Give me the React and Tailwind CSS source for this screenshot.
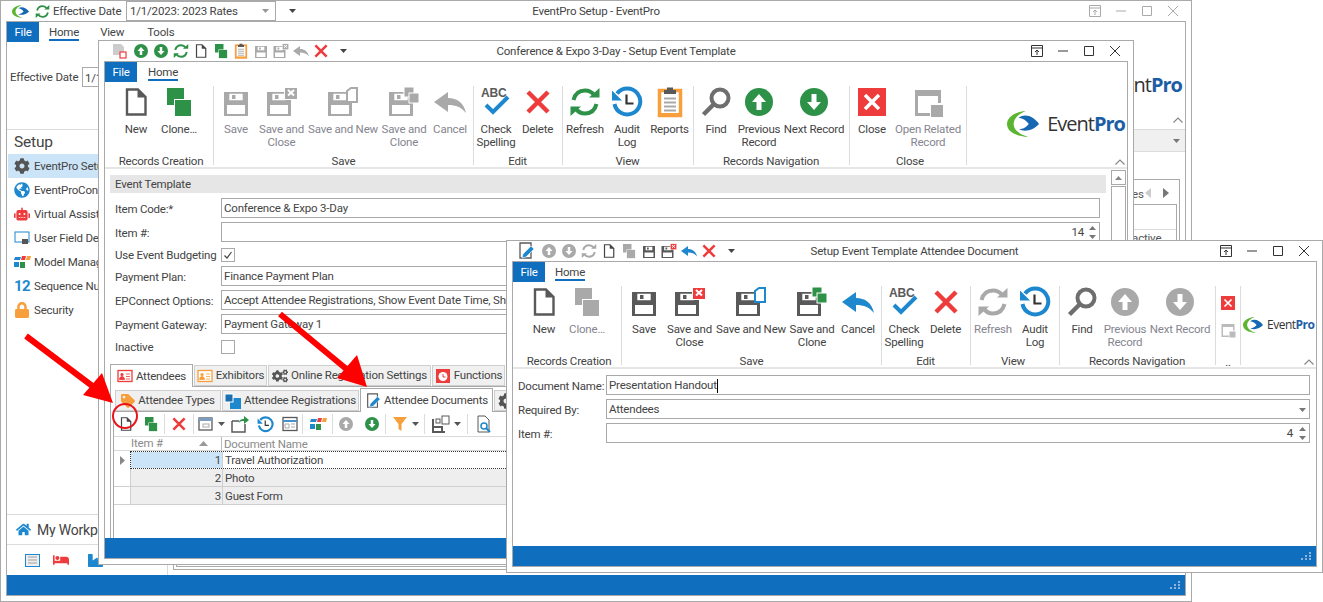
import React from 'react';
import { FaCog, FaCogs, FaGlobeAmericas, FaRobot, FaLock, FaHome, FaBed, FaIndustry, FaTag } from 'react-icons/fa';

const GREEN = '#2e9148';
const BLUE = '#1e88cf';
const RED = '#ee3b3b';
const ORANGE = '#f79f3d';
const DARK = '#595959';
const GREY = '#a9a9a9';

// every ribbon glyph lives in a 32x32 box, QAT re-uses them at 16-20px
function Svg({ size = 32, children, box = 32 }) {
  return (
    <svg width={size} height={size} viewBox={`0 0 ${box} ${box}`} className="shrink-0 block">
      {children}
    </svg>
  );
}

const Doc = ({ c = DARK, size }) => (
  <Svg size={size}>
    <path d="M7 3.5h11l7.5 7.5v17.5H7z" fill="#fff" stroke={c} strokeWidth="2.4" />
    <path d="M17.5 3l8.5 8.5h-8.5z" fill={c} />
  </Svg>
);

const Clone = ({ c = GREEN, size }) => (
  <Svg size={size}>
    <rect x="4" y="2" width="17" height="17" fill={c} />
    <rect x="11.5" y="13.5" width="17" height="17" fill={c} stroke="#fff" strokeWidth="1" />
  </Svg>
);

const Floppy = ({ c, x = 5 }) => (
  <g transform={`translate(${x} 6)`}>
    <path fillRule="evenodd" fill={c} d="M0 0h24v24H0z M5.300 1.700h13.400v6.600H5.300z M3 13h18v9H3z" />
    <rect x="8" y="3" width="3.500" height="4" fill={c} />
  </g>
);

const Save = ({ c = DARK, size }) => (
  <Svg size={size}>
    <Floppy c={c} x={4} />
  </Svg>
);

const SaveClose = ({ c = DARK, box = RED, size }) => (
  <Svg size={size}>
    <Floppy c={c} x={1} />
    <rect x="18.5" y="1.5" width="13" height="12" fill={box} stroke="#fff" />
    <path d="M22 4l6 5.5M28 4l-6 5.5" stroke="#fff" strokeWidth="2" />
  </Svg>
);

const SaveNew = ({ c = DARK, doc = BLUE, size }) => (
  <Svg size={size}>
    <Floppy c={c} x={1} />
    <path d="M20 15V5l4-3h6v14h-10z" fill="#fff" stroke={doc} strokeWidth="2" />
  </Svg>
);

const SaveClone = ({ c = DARK, g = GREEN, size }) => (
  <Svg size={size}>
    <Floppy c={c} x={1} />
    <rect x="16" y="1" width="10" height="10" fill={g} stroke="#fff" />
    <rect x="21" y="7" width="10" height="10" fill={g} stroke="#fff" />
  </Svg>
);

const Cancel = ({ c = BLUE, size }) => (
  <Svg size={size}>
    <path d="M0 16L14 6v6c9 0 16 5 18 15-5-6-10-8-18-8v7z" fill={c} />
  </Svg>
);

const Check = ({ size }) => (
  <Svg size={size}>
    <text x="1" y="11" fontSize="12" fontWeight="700" fontFamily="Liberation Sans, sans-serif" fill={DARK}>ABC</text>
    <path d="M6 19l7 7L28 11" fill="none" stroke={BLUE} strokeWidth="4" />
  </Svg>
);

const Cross = ({ c = RED, size }) => (
  <Svg size={size}>
    <path d="M6 6l20 20M26 6L6 26" stroke={c} strokeWidth="4.5" />
  </Svg>
);

const Refresh = ({ c = GREEN, size }) => (
  <Svg size={size}>
    <path d="M4.5 14C6 8 10 4.5 16 4.5c4 0 7 1.5 9.5 5" fill="none" stroke={c} strokeWidth="4" />
    <path d="M20 11.5h10.5V2z" fill={c} />
    <path d="M27.5 18c-1.5 6-5.500 9.500-11.500 9.500-4 0-7-1.500-9.500-5" fill="none" stroke={c} strokeWidth="4" />
    <path d="M12 20.500H1.500V30z" fill={c} />
  </Svg>
);

const Audit = ({ size }) => (
  <Svg size={size}>
    <path d="M6 7.500A13 13 0 1 1 3.500 18" fill="none" stroke={BLUE} strokeWidth="4" />
    <path d="M1 4.500v10h10z" fill={BLUE} />
    <path d="M15.500 8.500v9h7" fill="none" stroke="#333" strokeWidth="2.200" />
  </Svg>
);

const Reports = ({ size }) => (
  <Svg size={size}>
    <rect x="5.500" y="4.500" width="21" height="25" fill="#fff" stroke={ORANGE} strokeWidth="3.500" />
    <path d="M4 27h24v3.500H4z" fill={ORANGE} />
    <path d="M10 4h12v4H10zM13 1.500h6V4h-6z" fill={DARK} />
    <path d="M10 12.500h12M10 16.500h12M10 20.500h12M10 24.500h12" stroke={GREY} strokeWidth="1.800" />
  </Svg>
);

const Find = ({ size, c = '#6e6e6e' }) => (
  <Svg size={size}>
    <circle cx="20" cy="12" r="8.500" fill="none" stroke={c} strokeWidth="4" />
    <path d="M14 18L3.500 28.500" stroke={c} strokeWidth="4.500" />
  </Svg>
);

const Round = ({ down, c = GREEN, size }) => (
  <Svg size={size}>
    <circle cx="16" cy="16" r="14" fill={c} />
    {down ? (
      <path d="M13.500 8h5v8h4.500L16 24l-7-8h4.500z" fill="#fff" />
    ) : (
      <path d="M13.500 24h5v-8h4.500L16 8l-7 8h4.500z" fill="#fff" />
    )}
  </Svg>
);

const CloseBox = ({ size }) => (
  <Svg size={size}>
    <rect x="2" y="2" width="28" height="28" fill={RED} />
    <path d="M9 9l14 14M23 9L9 23" stroke="#fff" strokeWidth="3.500" />
  </Svg>
);

const OpenRelated = ({ size, c = GREY }) => (
  <Svg size={size}>
    <path d="M3 4h26v13h-3V10H6v17h12v3H3z" fill={c} />
    <rect x="19" y="19" width="12" height="12" fill={c} />
  </Svg>
);

// little toolbar glyphs under the sub tabs
const ViewDrop = () => (
  <Svg size={16} box={16}>
    <rect x="1" y="2" width="13" height="12" fill="#fff" stroke={DARK} strokeWidth="1.300" />
    <rect x="1" y="2" width="13" height="3" fill="#7a9dc0" />
    <rect x="5" y="8" width="6" height="3" fill="none" stroke={GREY} />
  </Svg>
);
const ImportIcon = () => (
  <Svg size={18} box={18}>
    <path d="M1 6h7M1 6v11h13V9" fill="none" stroke={DARK} strokeWidth="1.500" />
    <path d="M8 8c0-3 2-4 5-4V1l5 4-5 4V6c-2 0-4 0-5 2z" fill={GREEN} />
  </Svg>
);
const LayoutIcon = () => (
  <Svg size={16} box={16}>
    <rect x="1" y="1.500" width="14" height="13" fill="#fff" stroke={DARK} strokeWidth="1.300" />
    <path d="M1 5h14" stroke="#4a90c8" strokeWidth="2" />
    <path d="M9 8h4M9 11h4M3 8h4v4H3z" fill="none" stroke={GREY} />
  </Svg>
);
const Blocks = () => (
  <Svg size={18} box={18}>
    <path d="M1 7l1-3h6L7 7z" fill={BLUE} />
    <path d="M8 7l1-4h4l-1 4z" fill={RED} />
    <path d="M13 7l1-4h4l-1 4z" fill={ORANGE} />
    <path d="M1 14V9h5v5z" fill={BLUE} />
    <path d="M7 15V9h5v6z" fill={GREEN} />
  </Svg>
);
const Funnel = () => (
  <Svg size={16} box={16}>
    <path d="M1 1h14L9.500 8v7l-3-2V8z" fill={ORANGE} />
  </Svg>
);
const Layout2 = () => (
  <Svg size={18} box={18}>
    <path d="M1 4v13h12" fill="none" stroke={DARK} strokeWidth="2" />
    <path d="M1 12h9v5" fill="none" stroke={DARK} strokeWidth="2" />
    <rect x="4" y="4" width="4" height="4" fill="#fff" stroke={DARK} />
    <rect x="10" y="1" width="7" height="8" fill="#fff" stroke={DARK} />
  </Svg>
);
const SearchDoc = () => (
  <Svg size={18} box={18}>
    <path d="M3 1h7l4 4v12H3z" fill="#fff" stroke={DARK} />
    <circle cx="9" cy="11" r="3" fill="none" stroke={BLUE} strokeWidth="1.500" />
    <path d="M11 13l4 4" stroke={BLUE} strokeWidth="2" />
  </Svg>
);
const EditDoc = ({ size = 18 }) => (
  <Svg size={size} box={18}>
    <path d="M3 1h11v15H3z" fill="#fff" stroke={DARK} strokeWidth="1.300" />
    <path d="M5 16l1-4 8-8 3 3-8 8z" fill={BLUE} stroke="#fff" strokeWidth=".6" />
  </Svg>
);
const IdCard = ({ c }) => (
  <Svg size={16} box={16}>
    <rect x="1" y="2.500" width="14" height="11" fill="#fff" stroke={c} strokeWidth="1.300" />
    <circle cx="5" cy="6.500" r="1.600" fill={c} />
    <path d="M2.500 11.500c0-4 5-4 5 0zM9 6h4M9 8.500h4M9 11h4" fill={c} stroke={c} strokeWidth=".8" />
  </Svg>
);
const ClockBox = () => (
  <Svg size={16} box={16}>
    <rect x="1" y="1" width="14" height="14" fill={RED} />
    <circle cx="8" cy="8.500" r="4.500" fill="#fff" />
    <path d="M8 6v3h2.500" fill="none" stroke={RED} />
  </Svg>
);
const RegSquares = () => (
  <Svg size={16} box={16}>
    <rect x="5" y="5" width="11" height="11" fill={BLUE} />
    <rect x="0" y="1" width="8" height="8" fill="#1b6fae" stroke="#fff" />
  </Svg>
);

function Swoosh({ cls }) {
  return (
    <svg viewBox="0 0 36 27" preserveAspectRatio="none" className={cls}>
      <path d="M21 0C8 1 0 7 0 13.500 0 21 9 26 24 27 13 24 7.500 19 7.500 13.500 7.500 8 13 3 21 0z" fill="#5cb531" />
      <path d="M13 7c8-5 17-1 23 6.500-6 6-15 9-23 5.500 5 0 9-2.500 11.500-5.500C22 10 18 7.500 13 7z" fill="#1668b3" />
    </svg>
  );
}

function Logo({ small }) {
  return (
    <div className={small ? 'flex items-center gap-[4px]' : 'flex items-center gap-[8px]'}>
      <Swoosh cls={small ? 'w-[20px] h-[16px] shrink-0' : 'w-[32px] h-[26px] shrink-0'} />
      <div className={small ? 'flex text-[12px] leading-none tracking-[-0.5px] font-["Open_Sans",sans-serif]' : 'flex text-[20px] leading-none tracking-[-1px] font-["Open_Sans",sans-serif]'}>
        <span className="text-[#333]">Event</span>
        <span className="font-bold text-[#1c5ea6]">Pro</span>
      </div>
    </div>
  );
}

function Caret({ c = '#555' }) {
  return (
    <svg width="7" height="4" viewBox="0 0 7 4" className="shrink-0 block">
      <path d="M0 0h7L3.500 4z" fill={c} />
    </svg>
  );
}

function Chevron() {
  return (
    <svg width="10" height="6" viewBox="0 0 10 6" className="block">
      <path d="M.5 5.500L5 1l4.500 4.500" fill="none" stroke="#888" strokeWidth="1.200" />
    </svg>
  );
}

function Spin() {
  return (
    <div className="flex flex-col gap-[5px] shrink-0">
      <svg width="7" height="4" viewBox="0 0 7 4" className="block"><path d="M0 4h7L3.500 0z" fill="#777" /></svg>
      <Caret c="#777" />
    </div>
  );
}

function WinButtons({ c }) {
  return (
    <div className="flex items-center justify-end gap-[14px] pr-[12px]">
      <svg width="12" height="12" viewBox="0 0 12 12"><path d="M.5.500h11v11H.5zM.5 3h11M6 10V5M4 7l2-2 2 2" fill="none" stroke={c} /></svg>
      <svg width="12" height="12" viewBox="0 0 12 12"><path d="M1 6h10" stroke={c} /></svg>
      <svg width="12" height="12" viewBox="0 0 12 12"><path d="M1.500 1.500h9v9h-9z" fill="none" stroke={c} /></svg>
      <svg width="12" height="12" viewBox="0 0 12 12"><path d="M1 1l10 10M11 1L1 11" stroke={c} /></svg>
    </div>
  );
}

function Grip() {
  const dots = [[8, 0], [8, 3], [4, 3], [8, 6], [4, 6], [0, 6]];
  return (
    <svg width="10" height="8" viewBox="0 0 10 8" className="block">
      {dots.map(([x, y], i) => <rect key={i} x={x} y={y} width="2" height="2" fill="#8fb4d8" />)}
    </svg>
  );
}

function StatusBar() {
  return (
    <div className="h-[20px] shrink-0 bg-[#106ebe] flex items-center justify-end pr-[5px]">
      <Grip />
    </div>
  );
}

function MenuTabs({ items = [] , gap }) {
  return (
    <div className="flex h-[20px] shrink-0">
      <div className="w-[32px] h-[20px] pt-[1px] bg-[#106ebe] text-white flex items-center justify-center">File</div>
      <div className={gap}>
        <div className="h-[19px] leading-[20px] border-b-2 border-[#106ebe]">Home</div>
      </div>
      {items.map((t) => (
        <div key={t.label} className={t.cls}>{t.label}</div>
      ))}
    </div>
  );
}

function RibbonButton({ b }) {
  return (
    <div className={`${b.w} flex flex-col items-center`}>
      <div className="h-[32px] flex items-center justify-center">{b.icon}</div>
      <div className={b.off ? 'mt-[5px] text-center leading-[13px] whitespace-nowrap text-[#85858f]' : 'mt-[5px] text-center leading-[13px] whitespace-nowrap'}>
        {b.label.map((l) => <div key={l}>{l}</div>)}
      </div>
    </div>
  );
}

function RibbonGroup({ g }) {
  return (
    <>
      <div className={`${g.cls} h-[83px] flex flex-col shrink-0`}>
        <div className="flex h-[68px]">
          {g.items.map((b) => <RibbonButton key={b.label.join()} b={b} />)}
        </div>
        <div className="-mx-[12px] text-center leading-[14px] whitespace-nowrap">{g.label}</div>
      </div>
      <div className="w-px h-[79px] bg-[#dcdcdc] shrink-0" />
    </>
  );
}

function Ribbon({ groups, logo }) {
  return (
    <div className="relative flex h-[87px] pt-[4px] shrink-0 border-b-2 border-[#e6e6e6]">
      {groups.map((g) => <RibbonGroup key={g.label} g={g} />)}
      {logo}
      <div className="absolute right-[2px] bottom-[2px]"><Chevron /></div>
    </div>
  );
}

function Win({ cls, children, qat, title, buttons }) {
  return (
    <div className={`absolute isolate ${cls} bg-white border border-[#a9a9a9] flex flex-col`}>
      <div className="h-[20px] shrink-0 grid grid-cols-[1fr_auto_1fr] items-center">
        <div className="min-w-0">{qat}</div>
        <div className="whitespace-nowrap pt-[2px]">{title}</div>
        <WinButtons c={buttons} />
      </div>
      <div className="flex-1 min-h-0 mx-[5px] mb-[5px] border border-[#a9a9a9] flex flex-col overflow-hidden">
        {children}
      </div>
    </div>
  );
}

function Qat({ icons, cls }) {
  return (
    <div className={cls}>
      {icons.map((ic, i) => (
        <div key={i} className="w-[20px] h-[20px] flex items-center justify-center shrink-0">{ic}</div>
      ))}
      <div className="w-[24px] flex justify-center"><Caret c="#444" /></div>
    </div>
  );
}

function Box({ children, cls = '' }) {
  return (
    <div className={`h-[20px] border border-[#a9a9a9] flex items-center px-[2px] pt-[1px] whitespace-nowrap overflow-hidden ${cls}`}>
      {children}
    </div>
  );
}

function Field({ label, children }) {
  return (
    <div className="flex">
      <div className="w-[106px] leading-[22px] whitespace-nowrap shrink-0">{label}</div>
      <div className="flex-1 min-w-0">{children}</div>
    </div>
  );
}

function CheckRow({ label, on }) {
  return (
    <div className="flex h-[18px] items-center">
      <div className="w-[106px] pt-[1px] whitespace-nowrap shrink-0">{label}</div>
      <div className="w-[14px] h-[14px] border border-[#a9a9a9] flex items-center justify-center">
        {on && (
          <svg width="10" height="10" viewBox="0 0 10 10"><path d="M1.500 5.500L4 8l4.500-6" fill="none" stroke="#444" strokeWidth="1.200" /></svg>
        )}
      </div>
    </div>
  );
}

function Tab({ icon, label, w, active, sub }) {
  if (active) {
    return (
      <div className={`${w} ${sub ? 'h-[24px]' : 'h-[23px]'} bg-white border border-[#a9a9a9] border-b-0 flex items-center justify-center gap-[3px] whitespace-nowrap relative z-10 -mb-px shrink-0`}>
        {icon}<span className="pt-[1px]">{label}</span>
      </div>
    );
  }
  return (
    <div className={`${w} h-[21px] bg-[#f0f0f0] border border-[#cfcfcf] flex items-center justify-center gap-[3px] whitespace-nowrap self-end shrink-0`}>
      {icon}<span className="pt-[1px]">{label}</span>
    </div>
  );
}

function Sep() {
  return <div className="w-px h-[20px] bg-[#dcdcdc] shrink-0" />;
}

function Slot({ w, children }) {
  return <div className={`${w} flex items-center justify-center gap-[4px] shrink-0`}>{children}</div>;
}

const gridRows = [
  { n: 1, name: 'Travel Authorization', first: true },
  { n: 2, name: 'Photo' },
  { n: 3, name: 'Guest Form' },
];

function AttendeeGrid() {
  return (
    <div>
      <div className="flex h-[15px] border-t border-b border-[#d9d9d9] text-[#8a8a8a] leading-[15px]">
        <div className="w-[16px] shrink-0" />
        <div className="w-[92px] shrink-0 border-r border-[#bbb] px-[1px] flex items-center justify-between pr-[13px]">
          <span>Item #</span>
          <svg width="9" height="5" viewBox="0 0 9 5"><path d="M0 5h9L4.500 0z" fill="#999" /></svg>
        </div>
        <div className="flex-1 px-[2px] whitespace-nowrap">Document Name</div>
      </div>
      {gridRows.map((r) => (
        <div key={r.n} className={r.first ? 'flex h-[18px] leading-[17px]' : 'flex h-[18px] leading-[18px] border-b border-[#cfcfcf]'}>
          <div className="w-[16px] shrink-0 flex items-center justify-center">
            {r.first && <svg width="5" height="9" viewBox="0 0 5 9"><path d="M0 0l5 4.500L0 9z" fill="#888" /></svg>}
          </div>
          <div className={r.first ? 'flex-1 flex border border-dotted border-[#333] h-[18px]' : 'flex-1 flex bg-[#eeeeee] border-l border-[#cfcfcf]'}>
            <div className={r.first ? 'w-[92px] bg-[#cce4f7] text-right pr-[1px] border-r border-[#cfcfcf] shrink-0' : 'w-[92px] text-right pr-[1px] border-r border-[#cfcfcf] shrink-0'}>{r.n}</div>
            <div className="flex-1 px-[2px] whitespace-nowrap">{r.name}</div>
          </div>
        </div>
      ))}
    </div>
  );
}

const templateGroups = [
  { label: 'Records Creation', cls: 'pl-[13px] pr-[9px]', items: [
    { label: ['New'], w: 'w-[36px]', icon: <Doc /> },
    { label: ['Clone…'], w: 'w-[50px]', icon: <Clone /> },
  ] },
  { label: 'Save', cls: 'px-[5px]', items: [
    { label: ['Save'], w: 'w-[34px]', off: true, icon: <Save c={GREY} /> },
    { label: ['Save and', 'Close'], w: 'w-[57px]', off: true, icon: <SaveClose c={GREY} box={GREY} /> },
    { label: ['Save and New'], w: 'w-[66px]', off: true, icon: <SaveNew c={GREY} doc={GREY} /> },
    { label: ['Save and', 'Clone'], w: 'w-[56px]', off: true, icon: <SaveClone c={GREY} g={GREY} /> },
    { label: ['Cancel'], w: 'w-[36px]', off: true, icon: <Cancel c={GREY} /> },
  ] },
  { label: 'Edit', cls: 'pl-[2px] pr-[3px]', items: [
    { label: ['Check', 'Spelling'], w: 'w-[40px]', icon: <Check /> },
    { label: ['Delete'], w: 'w-[43px]', icon: <Cross /> },
  ] },
  { label: 'View', cls: 'pr-[1px]', items: [
    { label: ['Refresh'], w: 'w-[44px]', icon: <Refresh /> },
    { label: ['Audit', 'Log'], w: 'w-[40px]', icon: <Audit /> },
    { label: ['Reports'], w: 'w-[45px]', icon: <Reports /> },
  ] },
  { label: 'Records Navigation', cls: 'pl-[3px] pr-[4px]', items: [
    { label: ['Find'], w: 'w-[38px]', icon: <Find /> },
    { label: ['Previous', 'Record'], w: 'w-[48px]', icon: <Round /> },
    { label: ['Next Record'], w: 'w-[62px]', icon: <Round down /> },
  ] },
  { label: 'Close', cls: 'pl-[4px]', items: [
    { label: ['Close'], w: 'w-[36px]', icon: <CloseBox /> },
    { label: ['Open Related', 'Record'], w: 'w-[76px]', off: true, icon: <OpenRelated /> },
  ] },
];

const documentGroups = [
  { label: 'Records Creation', cls: 'pl-[13px] pr-[9px]', items: [
    { label: ['New'], w: 'w-[36px]', icon: <Doc /> },
    { label: ['Clone…'], w: 'w-[50px]', off: true, icon: <Clone c={GREY} /> },
  ] },
  { label: 'Save', cls: 'px-[5px]', items: [
    { label: ['Save'], w: 'w-[34px]', icon: <Save /> },
    { label: ['Save and', 'Close'], w: 'w-[57px]', icon: <SaveClose /> },
    { label: ['Save and New'], w: 'w-[66px]', icon: <SaveNew /> },
    { label: ['Save and', 'Clone'], w: 'w-[56px]', icon: <SaveClone /> },
    { label: ['Cancel'], w: 'w-[36px]', icon: <Cancel /> },
  ] },
  { label: 'Edit', cls: 'pl-[2px] pr-[3px]', items: [
    { label: ['Check', 'Spelling'], w: 'w-[40px]', icon: <Check /> },
    { label: ['Delete'], w: 'w-[43px]', icon: <Cross /> },
  ] },
  { label: 'View', cls: 'pr-[4px]', items: [
    { label: ['Refresh'], w: 'w-[44px]', off: true, icon: <Refresh c={GREY} /> },
    { label: ['Audit', 'Log'], w: 'w-[40px]', icon: <Audit /> },
  ] },
  { label: 'Records Navigation', cls: 'pl-[3px] pr-[4px]', items: [
    { label: ['Find'], w: 'w-[38px]', icon: <Find /> },
    { label: ['Previous', 'Record'], w: 'w-[48px]', off: true, icon: <Round c={GREY} /> },
    { label: ['Next Record'], w: 'w-[62px]', off: true, icon: <Round down c={GREY} /> },
  ] },
];

const sideItems = [
  { label: 'EventPro Setup', icon: <FaCog size={16} color="#555" />, active: true },
  { label: 'EventProConnect', icon: <FaGlobeAmericas size={16} color={BLUE} /> },
  { label: 'Virtual Assistant', icon: <FaRobot size={16} color={RED} /> },
  { label: 'User Field Definitions', icon: <Svg size={16} box={16}><rect x="1" y="2" width="14" height="10" fill="#fff" stroke={BLUE} /><path d="M8 9h6v5H8z" fill="#555" /></Svg> },
  { label: 'Model Management', icon: <Blocks /> },
  { label: 'Sequence Numbers', icon: <span className="font-bold text-[15px] leading-none text-[#1e88cf] tracking-[-0.5px]">12</span> },
  { label: 'Security', icon: <FaLock size={16} color={ORANGE} /> },
];

function MainWindow() {
  return (
    <Win
      cls="left-0 top-0 w-[1192px] h-[602px]"
      title="EventPro Setup - EventPro"
      buttons="#aaaaaa"
      qat={
        <div className="flex items-center h-[20px] pl-[11px]">
          <Swoosh cls="w-[17px] h-[13px] shrink-0" />
          <div className="ml-[6px]"><Refresh size={15} /></div>
          <span className="ml-[3px] pt-[2px] w-[70px] whitespace-nowrap">Effective Date</span>
          <div className="ml-[3px] w-[150px] h-[20px] border border-[#a9a9a9] flex items-center justify-between px-[3px] shrink-0">
            <span className="whitespace-nowrap pt-[2px]">1/1/2023: 2023 Rates</span>
            <span className="pr-[3px]"><Caret c="#999" /></span>
          </div>
          <div className="ml-[13px]"><Caret c="#444" /></div>
        </div>
      }
    >
      <MenuTabs
        gap="ml-[10px]"
        items={[
          { label: 'View', cls: 'ml-[21px] leading-[21px]' },
          { label: 'Tools', cls: 'ml-[23px] leading-[21px]' },
        ]}
      />
      <div className="relative h-[88px] shrink-0 border-b border-[#dcdcdc] flex justify-between">
        <div className="flex items-center h-[20px] mt-[25px] pl-[3px]">
          <span className="w-[72px] pt-[2px] whitespace-nowrap">Effective Date</span>
          <div className="w-[120px] h-[20px] border border-[#a9a9a9] px-[2px] leading-[20px]">
            <div className="w-[14px] overflow-hidden whitespace-nowrap">1/1/2023</div>
          </div>
        </div>
        <div className="mt-[30px] mr-[3px]"><Logo /></div>
        <div className="absolute right-[2px] bottom-[6px]"><Chevron /></div>
      </div>
      <div className="flex flex-1 min-h-0">
        <div className="w-[161px] shrink-0 border-r border-[#dcdcdc] flex flex-col">
          <div className="h-[24px] pl-[7px] text-[15.500px] leading-[24px]">Setup</div>
          {sideItems.map((s) => (
            <div key={s.label} className={s.active ? 'h-[24px] flex items-center gap-[3px] pl-[5px] ml-[1px] bg-[#cce4f7]' : 'h-[24px] flex items-center gap-[3px] pl-[5px] ml-[1px]'}>
              <span className="w-[18px] flex justify-center shrink-0">{s.icon}</span>
              <span className="w-[64px] pt-[2px] overflow-hidden whitespace-nowrap">{s.label}</span>
            </div>
          ))}
          <div className="mt-auto h-[31px] border-t border-b border-[#dcdcdc] flex items-center gap-[6px] pl-[9px] text-[14px]">
            <FaHome size={15} color={BLUE} />
            <span className="w-[61px] overflow-hidden whitespace-nowrap">My Workplace</span>
          </div>
          <div className="h-[30px] flex items-center pl-[18px] gap-[13px]">
            <Svg size={15} box={15}>
              <rect x=".5" y="1.500" width="14" height="12" fill="#eee" stroke={BLUE} />
              <path d="M3 4h9M3 7h9M3 10h9" stroke="#bbb" strokeWidth="1.500" />
            </Svg>
            <FaBed size={16} color={RED} />
            <span className="ml-[6px]"><FaIndustry size={15} color={BLUE} /></span>
          </div>
        </div>
        <div className="flex-1 min-w-0 flex flex-col">
          <div className="h-[22px] bg-[#f0f0f0] border-b border-[#dcdcdc] flex items-center justify-end pr-[5px] shrink-0">
            <Caret c="#777" />
          </div>
          <div className="flex-1 min-h-0 px-[5px] pt-[27px] pb-[5px] flex">
            <div className="flex-1 border border-[#a9a9a9] p-[2px] pt-[24px] relative">
              <div className="absolute top-[9px] left-[958px] text-[#555] whitespace-nowrap">es</div>
              <div className="absolute top-[8px] right-[10px] flex gap-[12px]">
                <svg width="6" height="10" viewBox="0 0 6 10"><path d="M6 0L0 5l6 5z" fill="#ccc" /></svg>
                <svg width="6" height="10" viewBox="0 0 6 10"><path d="M0 0l6 5-6 5z" fill="#777" /></svg>
              </div>
              <div className="h-full border border-[#a9a9a9] flex flex-col justify-start">
                <div className="h-[25px] border-b border-[#dcdcdc] mb-[1px]" />
                <div className="pl-[946px] text-[#555] leading-[14px]">Inactive</div>
              </div>
            </div>
          </div>
        </div>
      </div>
      <StatusBar />
    </Win>
  );
}

function TemplateWindow() {
  return (
    <Win
      cls="left-[98px] top-[40px] w-[1036px] h-[525px]"
      title="Conference & Expo 3-Day - Setup Event Template"
      buttons="#333333"
      qat={
        <Qat
          cls="flex items-center h-[20px] pl-[12px]"
          icons={[
            <div className="mr-[4px]"><Svg size={16} box={16}><path d="M2 1h8l3 3v8H2z" fill="#ccc" /><rect x="9" y="9" width="6" height="6" fill="#fff" stroke={RED} strokeWidth="1.200" /></Svg></div>,
            <Round size={16} />,
            <Round down size={16} />,
            <Refresh size={16} />,
            <Doc size={16} c="#444" />,
            <Clone size={16} />,
            <Reports size={16} />,
            <Save size={16} c={GREY} />,
            <SaveClose size={16} c={GREY} box={GREY} />,
            <Cancel size={16} c={GREY} />,
            <Cross size={18} />,
          ]}
        />
      }
    >
      <MenuTabs gap="ml-[11px]" />
      <Ribbon groups={templateGroups} logo={<div className="ml-auto mr-[2px] mt-[25px]"><Logo /></div>} />
      <div className="flex-1 min-h-0 flex overflow-hidden">
        <div className="w-[1001px] shrink-0 pl-[5px] pt-[6px] flex flex-col">
          <div className="h-[18px] bg-[#e6e6e6] pl-[5px] leading-[19px]">Event Template</div>
          <div className="pl-[5px] pr-[6px] pt-[5px] flex flex-col gap-[2px]">
            <Field label="Item Code:*"><Box>Conference &amp; Expo 3-Day</Box></Field>
            <Field label="Item #:">
              <Box cls="justify-end gap-[5px] pr-[3px]"><span>14</span><Spin /></Box>
            </Field>
            <CheckRow label="Use Event Budgeting" on />
            <Field label="Payment Plan:"><Box>Finance Payment Plan</Box></Field>
            <Field label="EPConnect Options:"><Box>Accept Attendee Registrations, Show Event Date Time, Show Event Location</Box></Field>
            <Field label="Payment Gateway:"><Box>Payment Gateway 1</Box></Field>
            <CheckRow label="Inactive" />
          </div>
          <div className="mt-[8px] flex gap-px border-b border-[#a9a9a9] h-[23px]">
            <Tab active label="Attendees" w="w-[83px]" icon={<IdCard c={RED} />} />
            <Tab label="Exhibitors" w="w-[73px]" icon={<IdCard c={ORANGE} />} />
            <Tab label="Online Registration Settings" w="w-[163px]" icon={<FaCogs size={16} color="#555" />} />
            <Tab label="Functions" w="w-[73px]" icon={<ClockBox />} />
          </div>
          <div className="flex-1 border-l border-[#a9a9a9] pl-[2px] flex flex-col">
            <div className="mt-[1px] flex gap-px border-b border-[#a9a9a9] h-[24px] pl-[2px]">
              <Tab label="Attendee Types" w="w-[106px]" icon={<FaTag size={14} color={ORANGE} />} />
              <Tab label="Attendee Registrations" w="w-[137px]" icon={<RegSquares />} />
              <Tab active sub label="Attendee Documents" w="w-[133px]" icon={<EditDoc size={16} />} />
              <div className="w-[60px] h-[21px] bg-[#f0f0f0] border border-[#cfcfcf] flex items-center pl-[3px] self-end shrink-0">
                <FaCog size={16} color="#555" />
              </div>
            </div>
            <div className="flex-1 border-l border-[#a9a9a9] flex flex-col">
              <div className="h-[24px] flex items-center shrink-0">
                <Slot w="w-[24px]"><Doc size={16} c="#444" /></Slot>
                <Slot w="w-[26px]"><Clone size={16} /></Slot>
                <Sep />
                <Slot w="w-[28px]"><Cross size={18} /></Slot>
                <Sep />
                <Slot w="w-[34px]"><ViewDrop /><Caret /></Slot>
                <Slot w="w-[24px]"><ImportIcon /></Slot>
                <Slot w="w-[26px]"><Audit size={17} /></Slot>
                <Slot w="w-[24px]"><LayoutIcon /></Slot>
                <Sep />
                <Slot w="w-[29px]"><Blocks /></Slot>
                <Sep />
                <Slot w="w-[26px]"><Round c={GREY} size={16} /></Slot>
                <Slot w="w-[26px]"><Round down size={16} /></Slot>
                <Sep />
                <Slot w="w-[38px]"><Funnel /><Caret /></Slot>
                <Sep />
                <Slot w="w-[42px]"><Layout2 /><Caret /></Slot>
                <Sep />
                <Slot w="w-[32px]"><SearchDoc /></Slot>
              </div>
              <AttendeeGrid />
            </div>
          </div>
        </div>
        <div className="ml-[5px] w-[15px] shrink-0 pt-[1px]">
          <div className="h-[15px] border border-[#a9a9a9] flex items-center justify-center">
            <svg width="7" height="4" viewBox="0 0 7 4"><path d="M0 4h7L3.500 0z" fill="#888" /></svg>
          </div>
          <div className="h-[400px] border border-[#a9a9a9] mt-px" />
        </div>
      </div>
      <StatusBar />
    </Win>
  );
}

function DocumentWindow() {
  return (
    <Win
      cls="left-[506px] top-[240px] w-[817px] h-[333px]"
      title="Setup Event Template Attendee Document"
      buttons="#333333"
      qat={
        <Qat
          cls="flex items-center h-[20px] pl-[12px]"
          icons={[
            <div className="mr-[6px]"><EditDoc size={18} /></div>,
            <Round c={GREY} size={16} />,
            <Round down c={GREY} size={16} />,
            <Refresh c={GREY} size={16} />,
            <Doc size={16} c="#444" />,
            <Clone c={GREY} size={16} />,
            <Save size={16} />,
            <SaveClose size={16} />,
            <Cancel size={16} />,
            <Cross size={18} />,
          ]}
        />
      }
    >
      <MenuTabs gap="ml-[10px]" />
      <Ribbon
        groups={documentGroups}
        logo={
          <>
            <div className="w-[24px] h-[83px] flex flex-col items-center shrink-0">
              <div className="h-[32px] pt-[9px]"><CloseBox size={16} /></div>
              <div className="mt-[4px]"><OpenRelated size={16} c="#bbb" /></div>
              <div className="mt-auto leading-[14px]">..</div>
            </div>
            <div className="w-px h-[79px] bg-[#dcdcdc] shrink-0" />
            <div className="ml-[2px] mt-[31px]"><Logo small /></div>
          </>
        }
      />
      <div className="flex-1 min-h-0 pl-[5px] pr-[6px] pt-[6px] flex flex-col gap-[2px]">
        <div className="flex">
          <div className="w-[88px] leading-[22px] whitespace-nowrap shrink-0">Document Name:</div>
          <Box cls="flex-1">Presentation Handout<span className="w-px h-[14px] bg-black" /></Box>
        </div>
        <div className="flex">
          <div className="w-[88px] leading-[22px] whitespace-nowrap shrink-0">Required By:</div>
          <Box cls="flex-1 justify-between pr-[3px]">Attendees<Caret c="#777" /></Box>
        </div>
        <div className="flex">
          <div className="w-[88px] leading-[22px] whitespace-nowrap shrink-0">Item #:</div>
          <Box cls="flex-1 justify-end gap-[6px] pr-[3px]"><span>4</span><Spin /></Box>
        </div>
      </div>
      <StatusBar />
    </Win>
  );
}

export default function App() {
  return (
    <div className="relative w-[1323px] h-[602px] overflow-hidden bg-white text-[#444] text-[11.5px] tracking-[-0.2px] leading-none font-['Roboto',sans-serif]">
      <MainWindow />
      <TemplateWindow />
      <DocumentWindow />
      {/* red call-outs drawn over the windows */}
      <svg width="1323" height="602" viewBox="0 0 1323 602" className="absolute left-0 top-0 pointer-events-none">
        <path d="M26 336L95 388" stroke="#ff0000" strokeWidth="6" />
        <path d="M113 403L83 395 102 373z" fill="#ff0000" />
        <path d="M280 314L350 372" stroke="#ff0000" strokeWidth="6" />
        <path d="M367 387L337 378 357 355z" fill="#ff0000" />
        <circle cx="125" cy="416" r="12" fill="none" stroke="#e8141c" strokeWidth="2" />
      </svg>
    </div>
  );
}
